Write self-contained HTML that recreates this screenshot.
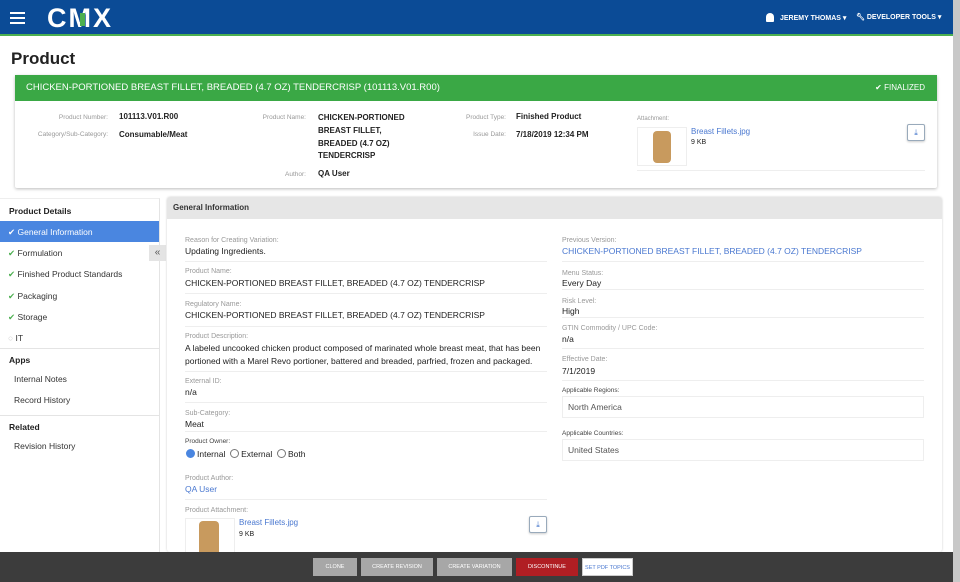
<!DOCTYPE html>
<html><head><meta charset="utf-8"><style>
*{box-sizing:border-box;margin:0;padding:0}
body{width:960px;height:582px;overflow:hidden;font-family:"Liberation Sans",sans-serif;background:#fff;position:relative;color:#222}
.a{position:absolute}
.nav{left:0;top:0;width:953px;height:36px;background:#0b4b96;border-bottom:2px solid #4caf50}
.sb{left:953px;top:0;width:7px;height:582px;background:#c8c8c8}
.lbl{font-size:7px;color:#999}
.val{font-size:8.5px;color:#222}
.b{font-weight:bold}
.lnk{color:#4a78d0}
.ln{position:absolute;height:1px;background:#eee}
.side div{position:absolute;font-size:8.5px;color:#333}
.btn{position:absolute;top:558px;height:18px;font-size:5.5px;color:#fff;text-align:center;line-height:18px;background:#a7a7a7}
.radio{display:inline-block;width:9px;height:9px;border:1px solid #777;border-radius:50%;vertical-align:-1px;margin-right:2px}
.dl{position:absolute;width:18px;height:17px;border:1px solid #9ab;border-radius:2px;background:#fff;box-shadow:0 1px 2px #ccc;color:#3a6fc8;font-size:8px;text-align:center;line-height:15px}
.img{position:absolute;border:1px solid #eee;background:#fff}
.img i{position:absolute;background:#c89a5e;border-radius:4px}
</style></head><body>
<div class="a nav"></div>
<div class="a" style="left:10px;top:12px;width:15px;height:2px;background:#fff;box-shadow:0 5px 0 #fff,0 10px 0 #fff"></div>
<div class="a" style="left:47px;top:4px;font-size:27px;font-weight:bold;color:#fff;letter-spacing:2px;line-height:28px">C<span style="position:relative">M<i style="position:absolute;left:11px;top:10px;width:5px;height:13px;background:#4caf50"></i></span>X</div>
<div class="a" style="left:766px;top:13px;width:8px;height:9px;background:#fff;border-radius:4px 4px 1px 1px"></div>
<div class="a" style="left:780px;top:14px;font-size:7px;font-weight:bold;color:#fff">JEREMY THOMAS ▾</div>
<div class="a" style="left:856px;top:13px;font-size:7px;font-weight:bold;color:#fff">🔧︎ DEVELOPER TOOLS ▾</div>
<div class="a sb"></div>
<div class="a" style="left:11px;top:49px;font-size:17px;font-weight:bold;color:#222">Product</div>
<div class="a" style="left:15px;top:75px;width:922px;height:113px;border-radius:2px;box-shadow:0 1px 3px #bbb;background:#fff"></div>
<div class="a" style="left:15px;top:75px;width:922px;height:26px;background:#3aa845;color:#fff;font-size:9.5px;line-height:26px;padding-left:11px">CHICKEN-PORTIONED BREAST FILLET, BREADED (4.7 OZ) TENDERCRISP (101113.V01.R00)<span style="position:absolute;right:12px;font-size:8px">✔ FINALIZED</span></div>
<div class="a lbl" style="left:57px;top:114px;width:51px;text-align:right;font-size:6.5px">Product Number:</div>
<div class="a val b" style="left:119px;top:112px;font-size:8px">101113.V01.R00</div>
<div class="a lbl" style="left:20px;top:131px;width:88px;text-align:right;font-size:6.5px">Category/Sub-Category:</div>
<div class="a val b" style="left:119px;top:130px;font-size:8px">Consumable/Meat</div>
<div class="a lbl" style="left:250px;top:114px;width:56px;text-align:right;font-size:6.5px">Product Name:</div>
<div class="a val b" style="left:318px;top:112px;font-size:8px;line-height:12.8px">CHICKEN-PORTIONED<br>BREAST FILLET,<br>BREADED (4.7 OZ)<br>TENDERCRISP</div>
<div class="a lbl" style="left:250px;top:171px;width:56px;text-align:right;font-size:6.5px">Author:</div>
<div class="a val b" style="left:318px;top:169px;font-size:8px">QA User</div>
<div class="a lbl" style="left:450px;top:114px;width:56px;text-align:right;font-size:6.5px">Product Type:</div>
<div class="a val b" style="left:516px;top:112px;font-size:8px">Finished Product</div>
<div class="a lbl" style="left:450px;top:131px;width:56px;text-align:right;font-size:6.5px">Issue Date:</div>
<div class="a val b" style="left:516px;top:130px;font-size:8px">7/18/2019 12:34 PM</div>
<div class="a lbl" style="left:637px;top:116px;font-size:6px">Attachment:</div>
<div class="img" style="left:637px;top:127px;width:50px;height:39px"><i style="left:15px;top:3px;width:18px;height:32px"></i></div>
<div class="a lnk" style="left:691px;top:127px;font-size:8px">Breast Fillets.jpg</div>
<div class="a val" style="left:691px;top:139px;font-size:7px">9 KB</div>
<div class="ln" style="left:637px;top:170px;width:288px"></div>
<div class="dl" style="left:907px;top:124px">⤓</div>

<div class="a" style="left:0;top:198px;width:160px;height:354px;background:#fff;border-right:1px solid #e4e4e4;border-top:1px solid #eee"></div>
<div class="side">
<div class="b" style="left:9px;top:206px;color:#222">Product Details</div>
<div style="left:0;top:221px;width:159px;height:21px;background:#4a86e0"></div>
<div style="left:8px;top:227px;color:#fff"><span style="color:#fff">✔</span> General Information</div>
<div style="left:8px;top:248px"><span style="color:#4caf50">✔</span> Formulation</div>
<div style="left:8px;top:269px"><span style="color:#4caf50">✔</span> Finished Product Standards</div>
<div style="left:8px;top:291px"><span style="color:#4caf50">✔</span> Packaging</div>
<div style="left:8px;top:312px"><span style="color:#4caf50">✔</span> Storage</div>
<div style="left:8px;top:333px"><span style="color:#ccc">○</span> IT</div>
<div style="left:0;top:348px;width:159px;height:1px;background:#e4e4e4"></div>
<div class="b" style="left:9px;top:355px;color:#222">Apps</div>
<div style="left:14px;top:374px">Internal Notes</div>
<div style="left:14px;top:395px">Record History</div>
<div style="left:0;top:415px;width:159px;height:1px;background:#e4e4e4"></div>
<div class="b" style="left:9px;top:422px;color:#222">Related</div>
<div style="left:14px;top:441px">Revision History</div>
</div>
<div class="a" style="left:149px;top:245px;width:17px;height:16px;background:#e4e4e4;font-size:10px;text-align:center;line-height:15px;color:#555">«</div>

<div class="a" style="left:167px;top:197px;width:775px;height:355px;background:#fff;box-shadow:0 0 2px #ccc;border-radius:3px"></div>
<div class="a" style="left:167px;top:197px;width:775px;height:22px;background:#e6e6e6;font-size:8px;font-weight:bold;line-height:22px;padding-left:6px;color:#333;border-radius:3px 3px 0 0">General Information</div>

<div class="a lbl" style="left:185px;top:237px">Reason for Creating Variation:</div>
<div class="a val" style="left:185px;top:246px">Updating Ingredients.</div>
<div class="ln" style="left:185px;top:261px;width:362px"></div>
<div class="a lbl" style="left:185px;top:268px">Product Name:</div>
<div class="a val" style="left:185px;top:278px">CHICKEN-PORTIONED BREAST FILLET, BREADED (4.7 OZ) TENDERCRISP</div>
<div class="ln" style="left:185px;top:293px;width:362px"></div>
<div class="a lbl" style="left:185px;top:301px">Regulatory Name:</div>
<div class="a val" style="left:185px;top:310px">CHICKEN-PORTIONED BREAST FILLET, BREADED (4.7 OZ) TENDERCRISP</div>
<div class="ln" style="left:185px;top:326px;width:362px"></div>
<div class="a lbl" style="left:185px;top:333px">Product Description:</div>
<div class="a val" style="left:185px;top:342px;line-height:13px;width:370px">A labeled uncooked chicken product composed of marinated whole breast meat, that has been portioned with a Marel Revo portioner, battered and breaded, parfried, frozen and packaged.</div>
<div class="ln" style="left:185px;top:371px;width:362px"></div>
<div class="a lbl" style="left:185px;top:378px">External ID:</div>
<div class="a val" style="left:185px;top:387px">n/a</div>
<div class="ln" style="left:185px;top:402px;width:362px"></div>
<div class="a lbl" style="left:185px;top:410px">Sub-Category:</div>
<div class="a val" style="left:185px;top:419px">Meat</div>
<div class="ln" style="left:185px;top:431px;width:362px"></div>
<div class="a" style="left:185px;top:438px;font-size:6.5px;color:#444">Product Owner:</div>
<div class="a val" style="left:186px;top:449px"><span class="radio" style="background:#4a86e0;border-color:#4a86e0"></span>Internal &nbsp;<span class="radio"></span>External &nbsp;<span class="radio"></span>Both</div>
<div class="a lbl" style="left:185px;top:475px">Product Author:</div>
<div class="a val lnk" style="left:185px;top:484px">QA User</div>
<div class="ln" style="left:185px;top:499px;width:362px"></div>
<div class="a lbl" style="left:185px;top:507px">Product Attachment:</div>
<div class="img" style="left:185px;top:518px;width:50px;height:40px"><i style="left:13px;top:2px;width:20px;height:36px"></i></div>
<div class="a lnk" style="left:239px;top:518px;font-size:8px">Breast Fillets.jpg</div>
<div class="a val" style="left:239px;top:531px;font-size:7px">9 KB</div>
<div class="dl" style="left:529px;top:516px">⤓</div>

<div class="a lbl" style="left:562px;top:237px">Previous Version:</div>
<div class="a val lnk" style="left:562px;top:246px">CHICKEN-PORTIONED BREAST FILLET, BREADED (4.7 OZ) TENDERCRISP</div>
<div class="ln" style="left:562px;top:261px;width:362px"></div>
<div class="a lbl" style="left:562px;top:270px">Menu Status:</div>
<div class="a val" style="left:562px;top:278px">Every Day</div>
<div class="ln" style="left:562px;top:289px;width:362px"></div>
<div class="a lbl" style="left:562px;top:298px">Risk Level:</div>
<div class="a val" style="left:562px;top:306px">High</div>
<div class="ln" style="left:562px;top:317px;width:362px"></div>
<div class="a lbl" style="left:562px;top:325px">GTIN Commodity / UPC Code:</div>
<div class="a val" style="left:562px;top:334px">n/a</div>
<div class="ln" style="left:562px;top:348px;width:362px"></div>
<div class="a lbl" style="left:562px;top:356px">Effective Date:</div>
<div class="a val" style="left:562px;top:366px">7/1/2019</div>
<div class="ln" style="left:562px;top:380px;width:362px"></div>
<div class="a" style="left:562px;top:387px;font-size:6.5px;color:#444">Applicable Regions:</div>
<div class="a" style="left:562px;top:396px;width:362px;height:22px;border:1px solid #eee;font-size:8.5px;color:#555;line-height:20px;padding-left:5px">North America</div>
<div class="a" style="left:562px;top:430px;font-size:6.5px;color:#444">Applicable Countries:</div>
<div class="a" style="left:562px;top:439px;width:362px;height:22px;border:1px solid #eee;font-size:8.5px;color:#555;line-height:20px;padding-left:5px">United States</div>

<div class="a" style="left:0;top:552px;width:953px;height:30px;background:#3c3c3c"></div>
<div class="btn" style="left:313px;width:44px">CLONE</div>
<div class="btn" style="left:361px;width:72px">CREATE REVISION</div>
<div class="btn" style="left:437px;width:75px">CREATE VARIATION</div>
<div class="btn" style="left:516px;width:62px;background:#b01e23">DISCONTINUE</div>
<div class="btn" style="left:582px;width:51px;background:#fff;color:#4a78d0;border:1px solid #ccc">SET PDF TOPICS</div>
</body></html>
